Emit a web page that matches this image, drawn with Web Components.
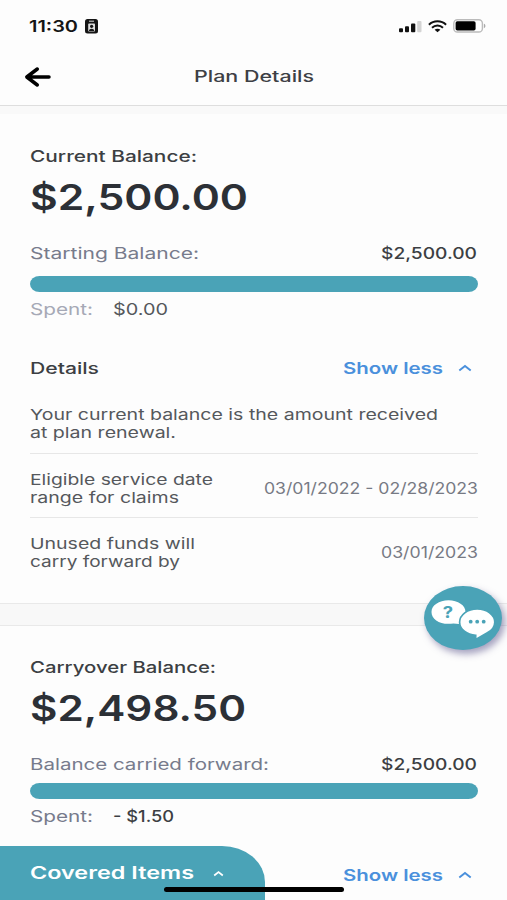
<!DOCTYPE html>
<html lang="en">
<head>
<meta charset="utf-8">
<title>Plan Details</title>
<style>
html,body{margin:0;height:100%;overflow:hidden;background:#fdfdfd}
</style>
</head>
<body>
<plan-screen></plan-screen>
<script>
const define = (name, html) => {
  const t = document.createElement('template');
  t.innerHTML = html;
  customElements.define(name, class extends HTMLElement {
    constructor() {
      super();
      this.attachShadow({mode: 'open'}).appendChild(t.content.cloneNode(true));
    }
  });
};

// A single line of text, widened to the width given in "w".
customElements.define('wide-text', class extends HTMLElement {
  connectedCallback() {
    const root = this.shadowRoot || this.attachShadow({mode: 'open'});
    const g = (n, d) => this.getAttribute(n) || d;
    root.innerHTML = `<style>
      :host{display:block;flex:none;width:${g('w', 100)}px;height:${g('h', 18)}px;
        font:${g('weight', 450)} ${g('size', 16)}px/${g('h', 18)}px Inter,"Liberation Sans",sans-serif;color:${g('color', '#3c3f43')}}
      span{display:inline-block;white-space:nowrap;transform-origin:0 50%}
    </style><span></span>`;
    const s = root.querySelector('span');
    s.textContent = g('text', '');
    s.style.transform = `scaleX(${+g('w', 100) / s.getBoundingClientRect().width})`;
  }
});

define('status-bar', `<style>
  :host{display:flex;height:52px;box-sizing:border-box;padding:0 21px 0 29px;align-items:center}
  .id{margin-left:6.5px}.sp{flex:1}.wifi{margin:0 6px 0 6px}
  </style>
  <wide-text w="49" size="16" weight="600" color="#151515" text="11:30"></wide-text>
  <svg class="id" width="13" height="15" viewBox="0 0 13 15"><rect width="13" height="14.5" rx="2.5" fill="#151515"/><path d="M4 2.2h5" stroke="#ddd" stroke-width="1"/><rect x="3.2" y="4.6" width="6.8" height="8" rx=".8" fill="#ddd"/><circle cx="6.6" cy="7.3" r="1.6" fill="#151515"/><path d="M3.9 12c.3-3 5.1-3 5.4 0z" fill="#151515"/></svg>
  <span class="sp"></span>
  <svg width="23" height="13" viewBox="0 0 23 13"><g fill="#111"><rect y="8.3" width="4" height="4" rx="1"/><rect x="6" y="6.2" width="4" height="6.1" rx="1"/><rect x="12" y="3.4" width="4.3" height="8.9" rx="1"/></g><rect x="18.2" y="1" width="4.3" height="11.3" rx="1" fill="#d4d4d4"/></svg>
  <svg class="wifi" width="19" height="13" viewBox="0 0 19 13" fill="none" stroke="#111"><path d="M.9 4.7c4.8-4.6 12.4-4.6 17.2 0" stroke-width="2"/><path d="M4 7.7c3.1-3 7.9-3 11 0" stroke-width="1.9"/><path d="M6.6 9.8c1.6-1.5 4.2-1.5 5.8 0L9.5 12.3z" fill="#111" stroke="none"/></svg>
  <svg width="33" height="14" viewBox="0 0 33 14"><rect x=".8" y=".8" width="28.6" height="12.2" rx="3.6" fill="#fff" stroke="#bbb" stroke-width="1.4"/><rect x="2.6" y="2.3" width="20" height="9.2" rx="1.7" fill="#000"/><path d="M30.9 4.8c2 .6 2 3.8 0 4.4z" fill="#aaa"/></svg>`);

define('nav-header', `<style>
  :host{display:grid;grid-template-columns:170px auto 1fr;height:54px;box-sizing:border-box;padding-left:24px;align-items:center;border-bottom:1px solid #dedede;padding-bottom:3px}
  </style>
  <svg width="28" height="22" viewBox="0 0 28 22" fill="none" stroke="#000" stroke-width="3.5" stroke-linecap="round" stroke-linejoin="round"><path d="M25 11H3M13.3 3 2.8 11l10.5 8"/></svg>
  <wide-text w="120" size="15.5" weight="550" color="#3d4045" text="Plan Details"></wide-text>`);

define('balance-bar', `<style>:host{display:block;width:448px;height:16px;border-radius:9.5px/8px;background:#4aa3b7}</style>`);

define('show-less', `<style>:host{display:flex;align-items:center;height:20px;padding-right:6px}svg{margin-left:15px}</style>
  <wide-text w="100" h="20" size="16" weight="600" color="#4a90dc" text="Show less"></wide-text>
  <svg width="14" height="8" viewBox="0 0 14 8" fill="none" stroke="#4a90dc" stroke-width="1.9"><path d="M1.3 6.6 7 1.9l5.7 4.7"/></svg>`);

define('detail-row', `<style>
  :host{display:flex;justify-content:space-between;align-items:center;height:64px;box-sizing:border-box;padding-top:5px}
  :host([line]){border-bottom:1px solid #e7e7e7;padding-top:6px}
  </style><div><slot></slot></div><slot name="value"></slot>`);

// Title, amount, starting value, progress bar and spent line of one balance.
define('balance-card', `<style>
  :host{display:block;padding:0 29px 0 30px}
  .row{display:flex;justify-content:space-between;align-items:center;height:20px;padding-right:1px}
  .spent{justify-content:flex-start}
  .lead{width:83px}
  </style>
  <slot name="title"></slot>
  <slot name="total"></slot>
  <div class="row"><slot name="label"></slot><slot name="start"></slot></div>
  <slot name="bar"></slot>
  <div class="row spent"><div class="lead"><slot name="spent"></slot></div><slot name="amount"></slot></div>
  <slot></slot>`);

define('section-gap', `<style>:host{display:block;height:23px;box-sizing:border-box;background:#f8f8f8;border:solid #e9e9e9;border-width:1px 0}</style>`);

define('chat-button', `<style>:host{display:block;width:78px;height:64px;border-radius:50%;background:#4aa3b7;box-shadow:3px 4px 7px rgba(75,70,130,.5)}svg{display:block}text{font:700 16px Inter,sans-serif}</style>
  <svg width="78" height="64" viewBox="0 0 78 64"><path d="M24.5 14.3c9.500 0 17 5.200 17 11.600 0 3-1.500 5-3.500 7l-3 5.100-5.500-.6c-12.500 2-22-3.500-22-11.500 0-6.400 7.500-11.600 17-11.600z" fill="#fff"/>
  <path d="M53.2 23c9.700 0 17.600 6 17.600 13.300 0 4.600-3.300 8.700-8.300 11L51.700 53.500v-4.200C43 48.700 35.600 43.500 35.600 36.300 35.600 29 43.500 23 53.200 23z" fill="#fff" stroke="#4aa3b7" stroke-width="1.7"/>
  <g fill="#4aa3b7"><circle cx="46.700" cy="35.700" r="1.900"/><circle cx="53.200" cy="35.700" r="1.900"/><circle cx="59.700" cy="35.700" r="1.900"/></g>
  <text transform="translate(18.7 31.5) scale(1.15 1)" fill="#4aa3b7">?</text></svg>`);

define('covered-items', `<style>:host{display:flex;align-items:center;width:265px;height:54px;box-sizing:border-box;padding-left:30px;background:#4aa3b7;border-radius:0 43px 0 0/0 36px 0 0}svg{margin-left:19px}</style>
  <wide-text w="164" h="20" size="17" weight="600" color="#fff" text="Covered Items"></wide-text>
  <svg width="11" height="7" viewBox="0 0 11 7" fill="none" stroke="#fff" stroke-width="1.7"><path d="M1.2 5.5 5.5 2l4.3 3.500"/></svg>`);

define('plan-screen', `<style>
  :host{display:block;position:relative;width:507px;height:900px;overflow:hidden;background:#fdfdfd}
  .band{height:8px;background:#f9f9f9}
  .first{padding-top:33px}
  .second{padding-top:32px}
  .details{display:flex;justify-content:space-between;align-items:center;height:20px;margin-top:39px}
  .copy{padding-top:28px;box-sizing:border-box;height:76px;border-bottom:1px solid #e7e7e7}
  .copy,detail-row{width:448px}
  .total{margin:13px 0 25px}
  balance-bar{margin:12.5px 0 7.5px}
  .b2{margin:8.5px 0 7.5px}
  section-gap{margin-top:21px}
  chat-button,covered-items,.home{position:absolute}
  chat-button{left:424px;top:586px}
  covered-items{left:0;bottom:0}
  .home{left:164px;top:887px;width:180px;height:5px;border-radius:3px;background:#000}
  </style>
  <status-bar></status-bar>
  <nav-header></nav-header>
  <div class="band"></div>
  <balance-card class="first">
    <wide-text slot="title" w="167" text="Current Balance:"></wide-text>
    <wide-text slot="total" class="total" w="218" h="40" size="35.5" weight="600" color="#2c3036" text="$2,500.00"></wide-text>
    <wide-text slot="label" w="169" weight="400" color="#777b8c" text="Starting Balance:"></wide-text>
    <wide-text slot="start" w="96" text="$2,500.00"></wide-text>
    <balance-bar slot="bar"></balance-bar>
    <wide-text slot="spent" w="63" weight="400" color="#a6a9b6" text="Spent:"></wide-text>
    <wide-text slot="amount" w="55" weight="400" color="#55585c" text="$0.00"></wide-text>
    <div class="details"><wide-text w="69" text="Details"></wide-text><show-less></show-less></div>
    <div class="copy">
      <wide-text w="408" size="15" weight="400" color="#55585c" text="Your current balance is the amount received"></wide-text>
      <wide-text w="146" size="15" weight="400" color="#55585c" text="at plan renewal."></wide-text>
    </div>
    <detail-row line>
      <wide-text w="183" size="15" weight="400" color="#55585c" text="Eligible service date"></wide-text>
      <wide-text w="149" size="15" weight="400" color="#55585c" text="range for claims"></wide-text>
      <wide-text slot="value" w="214" size="15.5" weight="400" color="#777a84" text="03/01/2022 - 02/28/2023"></wide-text>
    </detail-row>
    <detail-row>
      <wide-text w="165" size="15" weight="400" color="#55585c" text="Unused funds will"></wide-text>
      <wide-text w="150" size="15" weight="400" color="#55585c" text="carry forward by"></wide-text>
      <wide-text slot="value" w="97" size="15.5" weight="400" color="#777a84" text="03/01/2023"></wide-text>
    </detail-row>
  </balance-card>
  <section-gap></section-gap>
  <balance-card class="second">
    <wide-text slot="title" w="186" text="Carryover Balance:"></wide-text>
    <wide-text slot="total" class="total" w="216" h="40" size="35.5" weight="600" color="#2c3036" text="$2,498.50"></wide-text>
    <wide-text slot="label" w="239" weight="400" color="#777b8c" text="Balance carried forward:"></wide-text>
    <wide-text slot="start" w="96" text="$2,500.00"></wide-text>
    <balance-bar class="b2" slot="bar"></balance-bar>
    <wide-text slot="spent" w="63" weight="400" color="#777b8c" text="Spent:"></wide-text>
    <wide-text slot="amount" w="61" text="- $1.50"></wide-text>
    <div class="details"><span></span><show-less></show-less></div>
  </balance-card>
  <chat-button></chat-button>
  <covered-items></covered-items>
  <div class="home"></div>`);
</script>
</body>
</html>
